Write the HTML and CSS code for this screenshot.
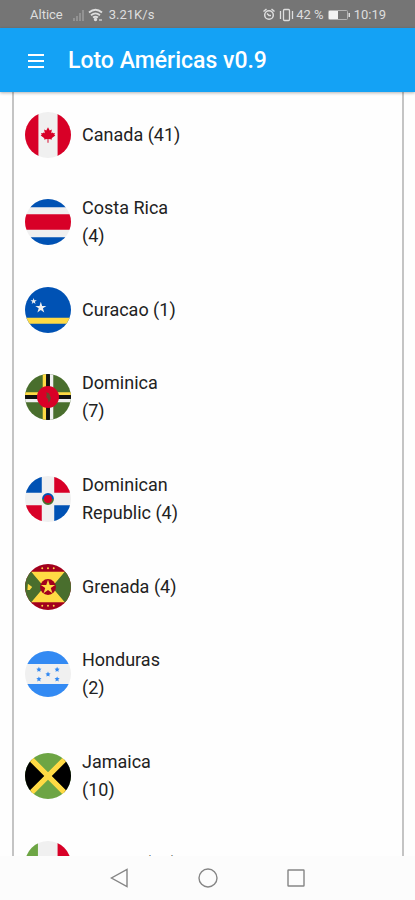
FILE: index.html
```html
<!DOCTYPE html>
<html lang="es">
<head>
<meta charset="utf-8">
<meta name="viewport" content="width=device-width, initial-scale=1">
<title>Loto Américas</title>
<link rel="stylesheet" href="styles.css">
</head>
<body>
<div class="status">
  <div class="status-group">
    <span class="carrier">Altice</span>
    <svg class="signal" width="14" height="14" viewBox="0 0 14 14" aria-hidden="true"><path d="M1 10h2v3H1zM4 8h2v5H4zM7 5h2v8H7zM10 2h2v11h-2z" fill="#929292"/></svg>
    <svg class="wifi" width="15" height="14" viewBox="0 0 15 14" aria-hidden="true" fill="none" stroke="#dedede" stroke-width="1.8"><path d="M1 4.500c4-3.400 9-3.400 13 0M3 7.200c3-2.400 6-2.400 9 0M5 9.600c1.700-1.200 3.300-1.200 5 0"/><circle cx="7.500" cy="11.500" r=".8" fill="#dedede"/><path d="M11 12h3" stroke-width="1.200"/></svg>
    <span>3.21K/s</span>
  </div>
  <div class="status-group">
    <svg width="12" height="13" viewBox="0 0 12 13" aria-hidden="true" fill="none" stroke="#dedede" stroke-width="1.500"><circle cx="6" cy="7" r="4.300"/><path d="M.5 3.500 3.500 1M11.500 3.500 8.500 1M4 5.500 6 7.500H8"/></svg>
    <svg class="vibrate" width="15" height="14" viewBox="0 0 15 14" aria-hidden="true" fill="none" stroke="#dedede" stroke-width="1.300"><rect x="4.500" y="1.500" width="6" height="11" rx="1"/><path d="M1.500 3v8M13.500 3v8"/></svg>
    <span class="percent">42 %</span>
    <svg class="battery" width="22" height="10" viewBox="0 0 22 10" aria-hidden="true"><rect x=".5" y=".5" width="19" height="9" rx="1" fill="none" stroke="#b4b4b4"/><path d="M1 1h9v8H1z" fill="#f2f2f2"/><path d="M20.500 3h1.500v4h-1.500z" fill="#dedede"/></svg>
    <span>10:19</span>
  </div>
</div>

<header class="bar">
  <button class="menu" type="button" aria-label="Menú">
    <svg width="16" height="16" viewBox="0 0 16 16" aria-hidden="true"><path d="M0 1h16v2H0zM0 7h16v2H0zM0 13h16v2H0z" fill="#fff"/></svg>
  </button>
  <h1>Loto Américas v0.9</h1>
</header>

<main>
  <ul class="countries">
    <li class="country">
      <svg class="flag" viewBox="0 0 48 48" aria-hidden="true"><path fill="#f0f0f0" d="M0 0h48v48H0z"/><path fill="#d80027" d="M0 0h14v48H0zM34 0h14v48H34z"/><path fill="#d80027" d="m24 16 1.800 3.200 2.200-.9-.6 4 1.500-1 .5 1 1.800-.3-.6 1.800 1 .8-3.800 2.800.4 1.200-3.700-.4V32h-1v-3.800l-3.700.4.4-1.200-3.800-2.800 1-.8-.6-1.800 1.800.3.500-1 1.500 1-.6-4 2.200.9z"/></svg>
      <span class="name">Canada (41)</span>
    </li>
    <li class="country country-wrap">
      <svg class="flag" viewBox="0 0 48 48" aria-hidden="true"><path fill="#f0f0f0" d="M0 0h48v48H0z"/><path fill="#0052b4" d="M0 0h48v8.500H0zM0 40h48v8H0z"/><path fill="#d80027" d="M0 16h48v16H0z"/></svg>
      <span class="name">Costa Rica (4)</span>
    </li>
    <li class="country">
      <svg class="flag" viewBox="0 0 48 48" aria-hidden="true"><path fill="#0052b4" d="M0 0h48v48H0z"/><path fill="#ffda44" d="M0 32h48v6.300H0z"/><path fill="#f0f0f0" d="m16.500 15.500 1.400 4.200h4.400l-3.600 2.600 1.400 4.200-3.600-2.600-3.600 2.600 1.400-4.200-3.600-2.600h4.400zM9 11.500l.8 2.300h2.500l-2 1.500.7 2.400-2-1.500-2 1.500.7-2.400-2-1.500h2.500z"/></svg>
      <span class="name">Curacao (1)</span>
    </li>
    <li class="country country-wrap">
      <svg class="flag" viewBox="0 0 48 48" aria-hidden="true"><path fill="#496e2d" d="M0 0h48v48H0z"/><path fill="#ffda44" d="M18.500 0H22v48h-3.500zM0 19h48v3H0z"/><path fill="#f0f0f0" d="M26 0h3.500v48H26zM0 26h48v3.500H0z"/><path fill="#111" d="M22 0h4v48h-4zM0 22h48v4H0z"/><circle cx="24" cy="24" r="11.500" fill="#d80027"/><path fill="#664b2c" d="m22 19 3 1 2 5-1 3-1.500 2-.5-4-2-2 .8-2z"/></svg>
      <span class="name">Dominica (7)</span>
    </li>
    <li class="country country-wrap">
      <svg class="flag" viewBox="0 0 48 48" aria-hidden="true"><path fill="#f0f0f0" d="M0 0h48v48H0z"/><path fill="#0052b4" d="M0 0h17.500v17.500H0zM30.500 30.500H48V48H30.500z"/><path fill="#d80027" d="M30.500 0H48v17.500H30.500zM0 30.500h17.500V48H0z"/><circle cx="24" cy="24" r="5" fill="#d80027"/><path d="M18.800 24a5.200 5.200 0 0 1 10.400 0" fill="none" stroke="#0052b4" stroke-width="2"/><path d="M18.800 24a5.200 5.200 0 0 0 10.400 0" fill="none" stroke="#496e2d" stroke-width="2"/></svg>
      <span class="name">Dominican Republic (4)</span>
    </li>
    <li class="country">
      <svg class="flag" viewBox="0 0 48 48" aria-hidden="true"><path fill="#a2001d" d="M0 0h48v48H0z"/><path fill="#ffda44" d="M6 8h36L30 24l12 16H6l12-16z"/><path fill="#496e2d" d="M0 8h6.500L20 24 6.500 40H0zM48 8h-6.500L28 24l13.500 16H48z"/><circle cx="24" cy="24" r="8.300" fill="#a2001d"/><path fill="#ffda44" d="m24 16.500 1.800 5.300h5.600l-4.500 3.300 1.700 5.400-4.600-3.300-4.600 3.300 1.700-5.400-4.500-3.300h5.600zM3 20.500l4.500 3.500L5 27H2.500z"/><g fill="#ffda44"><circle cx="18" cy="4.500" r="1"/><circle cx="24" cy="4.500" r="1"/><circle cx="30" cy="4.500" r="1"/><circle cx="18" cy="43.500" r="1"/><circle cx="24" cy="43.500" r="1"/><circle cx="30" cy="43.500" r="1"/></g></svg>
      <span class="name">Grenada (4)</span>
    </li>
    <li class="country country-wrap">
      <svg class="flag" viewBox="0 0 48 48" aria-hidden="true"><path fill="#f0f0f0" d="M0 0h48v48H0z"/><path fill="#338af3" d="M0 0h48v13.500H0zM0 34.500h48V48H0z"/><g fill="#338af3"><path id="star" d="m24 21.500.8 1.700 1.900.3-1.400 1.300.4 1.900-1.700-.9-1.700.9.4-1.900-1.400-1.300 1.900-.3z"/><use href="#star" x="-9.500" y="-5"/><use href="#star" x="9.500" y="-5"/><use href="#star" x="-9.500" y="5"/><use href="#star" x="9.500" y="5"/></g></svg>
      <span class="name">Honduras (2)</span>
    </li>
    <li class="country country-wrap">
      <svg class="flag" viewBox="0 0 48 48" aria-hidden="true"><path fill="#6da544" d="M0 0h48v48H0z"/><path fill="#000" d="M0 0l24 24L0 48zM48 0 24 24l24 24z"/><path d="m0 0 48 48M48 0 0 48" stroke="#ffda44" stroke-width="5.500"/></svg>
      <span class="name">Jamaica (10)</span>
    </li>
    <li class="country">
      <svg class="flag" viewBox="0 0 48 48" aria-hidden="true"><path fill="#f0f0f0" d="M0 0h48v48H0z"/><path fill="#6da544" d="M0 0h13.500v48H0z"/><path fill="#d80027" d="M34 0h14v48H34z"/><circle cx="24" cy="24" r="5" fill="#6da544"/></svg>
      <span class="name">Mexico (10)</span>
    </li>
  </ul>
</main>

<nav class="system" aria-label="Sistema">
  <button type="button" aria-label="Atrás"><svg width="20" height="20" viewBox="0 0 20 20"><path d="M17 1.500v17L1.500 10z"/></svg></button>
  <button type="button" aria-label="Inicio"><svg width="20" height="20" viewBox="0 0 20 20"><circle cx="10" cy="10" r="9"/></svg></button>
  <button type="button" aria-label="Recientes"><svg width="20" height="20" viewBox="0 0 20 20"><rect x="2" y="2" width="16" height="16" rx=".5"/></svg></button>
</nav>
</body>
</html>
```
FILE: styles.css
```css
* {
  box-sizing: border-box;
}

body {
  display: flex;
  flex-direction: column;
  height: 100vh;
  margin: 0;
  background: #fefefe;
  color: #222;
  font-family: Roboto, "Liberation Sans", sans-serif;
}

button {
  display: flex;
  padding: 0;
  border: 0;
  background: none;
}

.status {
  display: flex;
  flex: none;
  align-items: center;
  justify-content: space-between;
  height: 28px;
  padding: 1px 29px 0 30px;
  background: #757575;
  color: #dedede;
  font-size: 13px;
}

.status-group {
  display: flex;
  align-items: center;
}

.signal {
  margin-left: 9px;
}

.wifi {
  margin: 0 6px 0 2px;
}

.vibrate {
  margin-left: 4px;
}

.percent {
  margin: 0 4px 0 2px;
}

.battery {
  margin-right: 4px;
}

.bar {
  display: flex;
  z-index: 1;
  flex: none;
  align-items: center;
  gap: 24px;
  height: 64px;
  padding: 1px 28px 0;
  background: #14a2f5;
  box-shadow: 0 1px 3px rgba(0, 0, 0, 0.3);
  color: #fff;
}

.bar h1 {
  margin: 0;
  font-size: 23px;
  font-weight: 500;
}

main {
  flex: 1;
  min-height: 0;
  padding: 0 11px 0 12px;
  overflow: hidden;
}

.countries {
  margin: 0;
  padding: 6px 11px 0;
  border: solid #c4c4c4;
  border-width: 0 2px;
  list-style: none;
}

.country {
  display: flex;
  align-items: center;
  gap: 11px;
  min-height: 73px;
}

.country-wrap {
  padding: 23px 0;
}

.flag {
  flex: none;
  width: 46px;
  height: 46px;
  border-radius: 50%;
}

.name {
  width: 99px;
  font-size: 18px;
  line-height: 28px;
}

.system {
  display: flex;
  flex: none;
  align-items: center;
  justify-content: center;
  gap: 68px;
  height: 44px;
  background: #fcfcfc;
}

.system svg {
  fill: none;
  stroke: #858585;
  stroke-width: 1.4;
}
```
